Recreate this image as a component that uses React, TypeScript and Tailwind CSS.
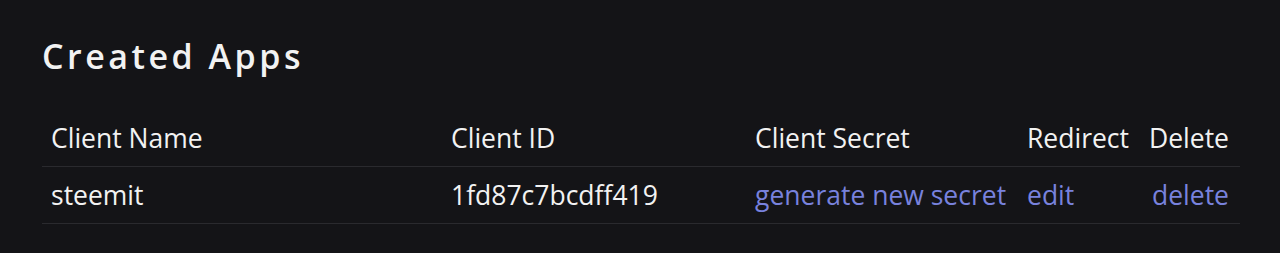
export default function App() {
  const apps = [{ name: 'steemit', id: '1fd87c7bcdff419' }];

  return (
    <div
      className="min-h-[253px] w-full bg-[#141417] px-[42px] pt-[36px] text-[#f2f2f2]"
      style={{ fontFamily: '"Open Sans", "Liberation Sans", sans-serif' }}
    >
      <h2 className="text-[34px] leading-[40px] font-semibold tracking-[3.5px]">Created Apps</h2>

      <table className="mt-[34px] w-[1198px] table-fixed border-collapse text-[26.5px]">
        <colgroup>
          <col className="w-[400px]" />
          <col className="w-[304px]" />
          <col className="w-[272px]" />
          <col className="w-[123px]" />
          <col className="w-[99px]" />
        </colgroup>
        <thead>
          <tr className="border-b border-[#2a2a2e]">
            <th className="h-[56px] px-[9px] pt-[2px] text-left font-normal">Client Name</th>
            <th className="h-[56px] px-[9px] pt-[2px] text-left font-normal">Client ID</th>
            <th className="h-[56px] px-[9px] pt-[2px] text-left font-normal">Client Secret</th>
            <th className="h-[56px] px-[9px] pt-[2px] text-left font-normal">Redirect</th>
            <th className="h-[56px] pr-[11px] pt-[2px] text-right font-normal">Delete</th>
          </tr>
        </thead>
        <tbody>
          {apps.map((app) => (
            <tr key={app.id} className="border-b border-[#2a2a2e]">
              <td className="h-[57px] px-[9px] pt-[2px]">{app.name}</td>
              <td className="h-[57px] px-[9px] pt-[2px]">{app.id}</td>
              <td className="h-[57px] px-[9px] pt-[2px] text-[#7882dd]">generate new secret</td>
              <td className="h-[57px] px-[9px] pt-[2px] text-[#7882dd]">edit</td>
              <td className="h-[57px] pr-[11px] pt-[2px] text-right text-[#7882dd]">delete</td>
            </tr>
          ))}
        </tbody>
      </table>
    </div>
  );
}
